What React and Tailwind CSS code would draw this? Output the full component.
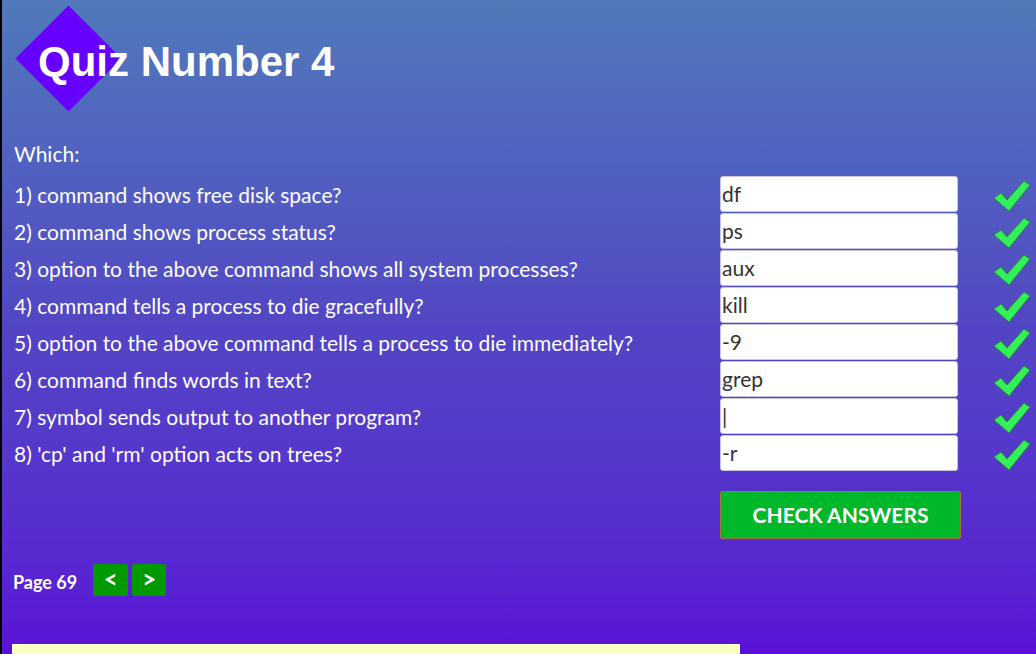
const questions = [
  ["1) command shows free disk space?", "df"],
  ["2) command shows process status?", "ps"],
  ["3) option to the above command shows all system processes?", "aux"],
  ["4) command tells a process to die gracefully?", "kill"],
  ["5) option to the above command tells a process to die immediately?", "-9"],
  ["6) command finds words in text?", "grep"],
  ["7) symbol sends output to another program?", "|"],
  ["8) 'cp' and 'rm' option acts on trees?", "-r"],
];

function Tick() {
  return (
    <svg width="38" height="34" viewBox="0 0 38 34">
      <path
        d="M1 19 L8 14 L14 21 L31 2 L37 6 L16 32 Z"
        fill="#33f05a"
        stroke="#2c8a3a"
        strokeWidth="1"
        strokeLinejoin="round"
      />
    </svg>
  );
}

export default function App() {
  return (
    <div
      className="w-[1036px] h-[654px] overflow-hidden border-l-2 border-black bg-gradient-to-b from-[#5079ba] via-[#5245c4] to-[#5a10d6] text-white"
      style={{ fontFamily: "Lato, 'Open Sans', sans-serif" }}
    >
      <div className="relative h-[118px] pl-[36px] flex items-center">
        <div className="absolute left-[29px] top-[21px] w-[75px] h-[75px] bg-[#6600ff] rotate-45" />
        <h1
          className="relative text-[42px] font-bold leading-none mt-[6px]"
          style={{ fontFamily: "'Liberation Sans', Arial, sans-serif" }}
        >
          Quiz Number 4
        </h1>
      </div>
      <div className="pl-[12px]">
        <div className="text-[21px] h-[40px] flex items-center mt-[16px] mb-[2px]">Which:</div>
        <div className="flex flex-col gap-px">
          {questions.map(([q, a]) => (
            <div key={q} className="flex items-center h-[36px]">
              <div className="w-[706px] text-[21px] mt-[2px]">{q}</div>
              <div className="w-[238px] h-[36px] bg-white rounded-[3px] border border-[#c9c4e6] text-[#333] text-[21px] flex items-center px-[1px]">
                {a}
              </div>
              <div className="ml-[35px] mt-[4px]">
                <Tick />
              </div>
            </div>
          ))}
        </div>
        <button className="ml-[706px] mt-[20px] w-[241px] h-[48px] bg-[#00b82a] border border-[#9a7a3a] rounded-[2px] text-white text-[21px] font-bold">
          CHECK ANSWERS
        </button>
        <div className="flex items-center mt-[25px] h-[32px] -ml-[1px]">
          <span className="text-[18px] font-bold mt-[4px]">Page 69</span>
          <button className="ml-[16px] w-[35px] h-[32px] bg-[#009900] rounded-[2px] font-bold text-[24px] leading-none pb-[2px]">&lt;</button>
          <button className="ml-[4px] w-[34px] h-[32px] bg-[#009900] rounded-[2px] font-bold text-[24px] leading-none pb-[2px]">&gt;</button>
        </div>
        <div className="mt-[48px] -ml-[2px] w-[728px] h-[20px] bg-[#f8ffc4]" />
      </div>
    </div>
  );
}
